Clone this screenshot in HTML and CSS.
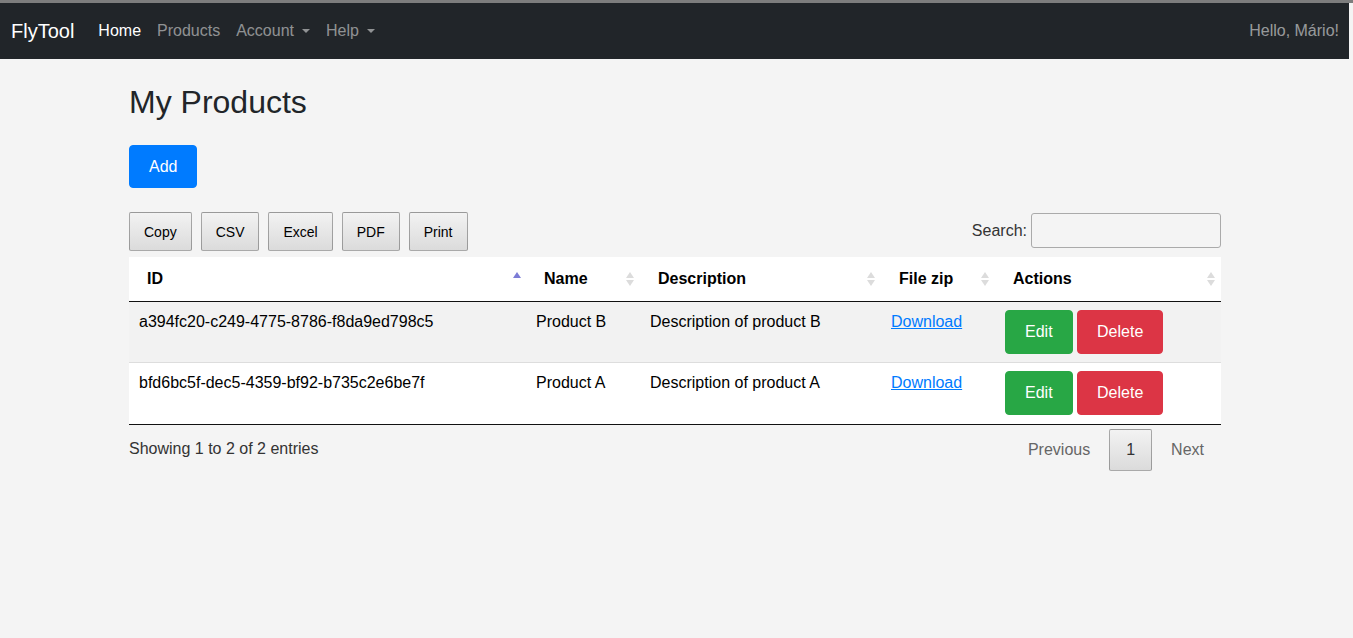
FILE: index.html
```html
<!DOCTYPE html>
<html lang="en">
<head>
<meta charset="utf-8">
<title>FlyTool - My Products</title>
<link rel="stylesheet" href="styles.css">
</head>
<body>
<div class="topline"></div>
<nav class="navbar">
  <a class="brand" href="#">FlyTool</a>
  <ul class="nav">
    <li><a class="nav-link active" href="#">Home</a></li>
    <li><a class="nav-link" href="#">Products</a></li>
    <li><a class="nav-link dropdown" href="#">Account</a></li>
    <li><a class="nav-link dropdown" href="#">Help</a></li>
  </ul>
  <span class="nav-text">Hello, Mário!</span>
</nav>

<main class="container">
  <h1 class="title">My Products</h1>
  <a class="btn btn-primary" href="#">Add</a>

  <div class="dt-top">
    <div class="dt-buttons">
      <button class="dt-button">Copy</button>
      <button class="dt-button">CSV</button>
      <button class="dt-button">Excel</button>
      <button class="dt-button">PDF</button>
      <button class="dt-button">Print</button>
    </div>
    <label class="dt-search">Search:<input type="search" class="search-input"></label>
  </div>

  <table class="dt-table">
    <colgroup>
      <col class="c-id"><col class="c-name"><col class="c-desc"><col class="c-file"><col class="c-act">
    </colgroup>
    <thead>
      <tr>
        <th class="sort-asc">ID</th>
        <th class="sort-both">Name</th>
        <th class="sort-both">Description</th>
        <th class="sort-both">File zip</th>
        <th class="sort-both">Actions</th>
      </tr>
    </thead>
    <tbody>
      <tr class="odd">
        <td>a394fc20-c249-4775-8786-f8da9ed798c5</td>
        <td>Product B</td>
        <td>Description of product B</td>
        <td><a class="link" href="#">Download</a></td>
        <td><a class="btn btn-success" href="#">Edit</a> <a class="btn btn-danger" href="#">Delete</a></td>
      </tr>
      <tr class="even">
        <td>bfd6bc5f-dec5-4359-bf92-b735c2e6be7f</td>
        <td>Product A</td>
        <td>Description of product A</td>
        <td><a class="link" href="#">Download</a></td>
        <td><a class="btn btn-success" href="#">Edit</a> <a class="btn btn-danger" href="#">Delete</a></td>
      </tr>
    </tbody>
  </table>

  <div class="dt-bottom">
    <div class="dt-info">Showing 1 to 2 of 2 entries</div>
    <div class="dt-paging">
      <a class="page-btn disabled">Previous</a>
      <a class="page-btn current">1</a>
      <a class="page-btn disabled">Next</a>
    </div>
  </div>
</main>
</body>
</html>
```

FILE: styles.css
```css
* { box-sizing: border-box; }

html, body {
  margin: 0;
  padding: 0;
}

body {
  background: #f4f4f4;
  font-family: "Liberation Sans", Arial, Helvetica, sans-serif;
  font-size: 16px;
  line-height: 24px;
  color: #212529;
}

.topline {
  height: 3px;
  background: #7d7d7d;
}

.navbar {
  display: flex;
  align-items: center;
  height: 56px;
  margin-right: 4px;
  padding: 0 10px 1px 11px;
  background: #212529;
}

.brand {
  color: #fff;
  font-size: 20px;
  line-height: 30px;
  text-decoration: none;
  margin-right: 16px;
}

.nav {
  display: flex;
  list-style: none;
  margin: 0;
  padding: 0;
  flex: 1;
}

.nav-link {
  display: flex;
  align-items: center;
  padding: 8px;
  color: rgba(255, 255, 255, 0.5);
  text-decoration: none;
}

.nav-link.active { color: #fff; }

.nav-link.dropdown::after {
  content: "";
  display: inline-block;
  margin-left: 8px;
  margin-top: 1px;
  border-top: 4.8px solid rgba(255, 255, 255, 0.5);
  border-left: 4.8px solid transparent;
  border-right: 4.8px solid transparent;
}

.nav-text {
  color: rgba(255, 255, 255, 0.55);
}

.container {
  width: 1092px;
  margin-left: 129px;
}

.title {
  font-size: 32px;
  font-weight: 400;
  line-height: 38.4px;
  margin: 24px 0 24px;
  color: #212529;
}

.btn {
  display: inline-block;
  padding: 9px 19px;
  line-height: 24px;
  font-size: 16px;
  color: #fff;
  text-decoration: none;
  border: 1px solid transparent;
  border-radius: 4px;
  vertical-align: middle;
}

.btn-primary { background: #007bff; border-color: #007bff; padding: 9px 19px 8px; }
.btn-success { background: #28a745; border-color: #28a745; }
.btn-danger { background: #dc3545; border-color: #dc3545; margin-left: 0; }

.dt-top {
  display: flex;
  justify-content: space-between;
  align-items: flex-start;
  margin-top: 24px;
  margin-bottom: 6px;
}

.dt-buttons {
  display: flex;
  gap: 9px;
}

.dt-button {
  font-family: "Liberation Sans", Arial, sans-serif;
  font-size: 14px;
  line-height: 22.5px;
  padding: 7px 14px;
  height: 39px;
  color: #000;
  border: 1px solid rgba(0, 0, 0, 0.3);
  border-radius: 2px;
  background: linear-gradient(to bottom, rgba(230, 230, 230, 0.1) 0%, rgba(0, 0, 0, 0.1) 100%);
  background-color: #f4f4f4;
}

.dt-search {
  display: flex;
  align-items: center;
  margin-top: 1px;
  color: #333;
}

.search-input {
  width: 190px;
  height: 35px;
  margin-left: 4px;
  border: 1px solid #aaa;
  border-radius: 3px;
  background: transparent;
  padding: 5px;
}

.dt-table {
  width: 1092px;
  border-collapse: collapse;
  table-layout: fixed;
}

.c-id { width: 397px; }
.c-name { width: 114px; }
.c-desc { width: 241px; }
.c-file { width: 114px; }
.c-act { width: 226px; }

.dt-table thead th {
  position: relative;
  background: #fff;
  text-align: left;
  font-weight: 700;
  color: #000;
  padding: 10px 18px;
  line-height: 24px;
  border-bottom: 1px solid #111;
}

.sort-both::before,
.sort-both::after,
.sort-asc::before {
  content: "";
  position: absolute;
  right: 6px;
  border-left: 4px solid transparent;
  border-right: 4px solid transparent;
}

.sort-both::before {
  top: 15px;
  border-bottom: 6px solid #dcdcdc;
}

.sort-both::after {
  top: 23px;
  border-top: 6px solid #dcdcdc;
}

.sort-asc::before {
  right: 5px;
  top: 15px;
  border-bottom: 6px solid #7c7cd6;
}

.dt-table tbody td {
  padding: 8px 10px;
  line-height: 24px;
  vertical-align: top;
  color: #000;
}

.dt-table tbody tr.odd { background: #f2f2f2; }
.dt-table tbody tr.even { background: #fff; }
.dt-table tbody tr.even td { padding-bottom: 9px; }
.dt-table tbody tr + tr td { border-top: 1px solid #ddd; }
.dt-table tbody tr:last-child td { border-bottom: 1px solid #111; }

.link {
  color: #007bff;
  text-decoration: underline;
}

.dt-bottom {
  display: flex;
  justify-content: space-between;
  align-items: flex-start;
}

.dt-info {
  padding-top: 12px;
  color: #333;
}

.dt-paging {
  display: flex;
  padding-top: 4px;
}

.page-btn {
  display: block;
  min-width: 24px;
  padding: 8px 16px;
  margin-left: 2px;
  line-height: 24px;
  text-align: center;
  border: 1px solid transparent;
  border-radius: 2px;
  color: #333;
  text-decoration: none;
}

.page-btn.disabled { color: #666; }

.page-btn.current {
  border: 1px solid rgba(0, 0, 0, 0.3);
  background: linear-gradient(to bottom, rgba(230, 230, 230, 0.1) 0%, rgba(0, 0, 0, 0.1) 100%);
  color: #333;
}
```
